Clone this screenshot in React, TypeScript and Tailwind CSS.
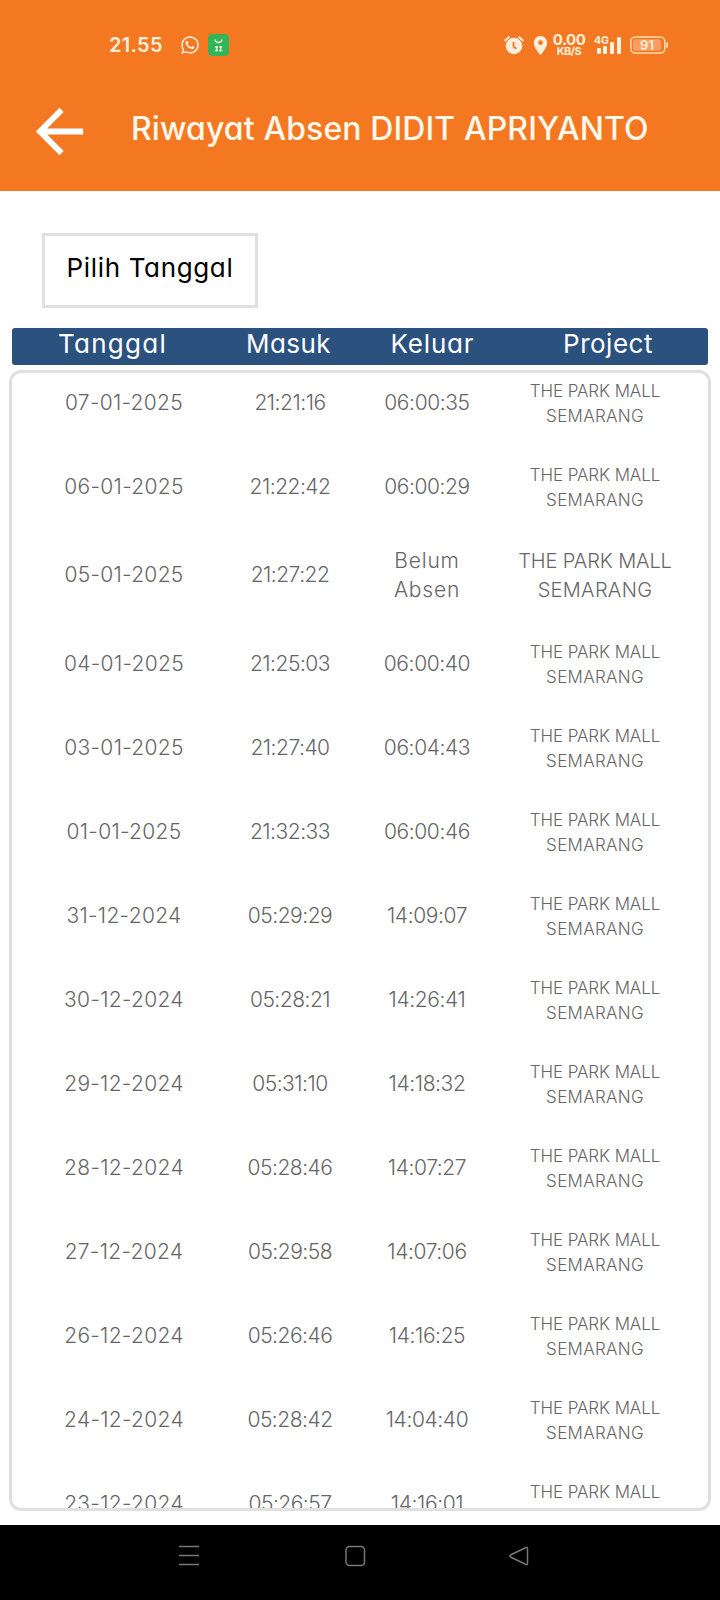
import clsx from "clsx";
import { FaWhatsapp } from "react-icons/fa";
import { MdArrowBack, MdLocationOn } from "react-icons/md";

interface Attendance {
  date: string;
  checkIn: string;
  checkOut: string | null;
}

const rows: Attendance[] = [
  { date: "07-01-2025", checkIn: "21:21:16", checkOut: "06:00:35" },
  { date: "06-01-2025", checkIn: "21:22:42", checkOut: "06:00:29" },
  { date: "05-01-2025", checkIn: "21:27:22", checkOut: null },
  { date: "04-01-2025", checkIn: "21:25:03", checkOut: "06:00:40" },
  { date: "03-01-2025", checkIn: "21:27:40", checkOut: "06:04:43" },
  { date: "01-01-2025", checkIn: "21:32:33", checkOut: "06:00:46" },
  { date: "31-12-2024", checkIn: "05:29:29", checkOut: "14:09:07" },
  { date: "30-12-2024", checkIn: "05:28:21", checkOut: "14:26:41" },
  { date: "29-12-2024", checkIn: "05:31:10", checkOut: "14:18:32" },
  { date: "28-12-2024", checkIn: "05:28:46", checkOut: "14:07:27" },
  { date: "27-12-2024", checkIn: "05:29:58", checkOut: "14:07:06" },
  { date: "26-12-2024", checkIn: "05:26:46", checkOut: "14:16:25" },
  { date: "24-12-2024", checkIn: "05:28:42", checkOut: "14:04:40" },
  { date: "23-12-2024", checkIn: "05:26:57", checkOut: "14:16:01" },
];

function StatusBar() {
  return (
    <div className="flex h-[90px] items-center pl-[109px] text-[#fff0dc]">
      <span className="w-[71px] text-[20px] font-semibold tracking-[0.3px]">21.55</span>
      <FaWhatsapp className="size-[20px]" />
      <svg className="ml-[8px] h-[22px] w-[21px]" viewBox="0 0 21 22" fill="none">
        <rect width="21" height="22" rx="4.5" fill="#32b558" />
        <path d="M7 5.5c.4 4 6.6 4 7 0" stroke="#fff0dc" strokeWidth="1.3" />
        <path d="M7 13h3M11.2 13h3M7 16.5h3M11.2 16.5h3M8.8 12v5.5M12.6 12v5.5" stroke="#e0f5d8" strokeWidth="1.3" />
      </svg>
      <svg className="ml-[275px] h-[20px] w-[20px]" viewBox="0 0 20 20" fill="none">
        <circle cx="10" cy="11" r="8.3" fill="#ffeddc" />
        <path d="M1 5.5 5 2M19 5.5 15 2" stroke="#ffeddc" strokeWidth="1.8" strokeLinecap="round" />
        <path d="M9.5 7v4.5l3 2.2" stroke="#f47822" strokeWidth="1.8" />
      </svg>
      <MdLocationOn className="ml-[5px] size-[23px]" />
      <div className="ml-[1px] flex w-[32px] flex-col items-center font-bold">
        <span className="text-[15px] leading-[12px] tracking-[-0.5px]">0.00</span>
        <span className="text-[11px] leading-[10px] tracking-[-0.5px]">KB/S</span>
      </div>
      <svg className="ml-[9px] h-[20px] w-[28px] fill-current" viewBox="0 0 28 20">
        <text x="0" y="9" className="text-[10.5px] font-bold">4G</text>
        <rect x="3" y="13" width="4" height="6" rx="1" />
        <rect x="9" y="11" width="4" height="8" rx="1" />
        <rect x="16" y="7" width="4" height="12" rx="1" />
        <rect x="23" y="2" width="4" height="17" rx="1" />
      </svg>
      <svg className="ml-[8px] h-[18px] w-[39px]" viewBox="0 0 39 18" fill="none">
        <rect x="0.8" y="1" width="34" height="16" rx="4.5" stroke="#ffd9b4" strokeWidth="1.5" />
        <rect x="3" y="3.2" width="28" height="11.6" rx="2.5" fill="#f99d60" />
        <path d="M37 6.5v5" stroke="#ffd9b4" strokeWidth="2" />
        <text x="17" y="13.8" textAnchor="middle" fill="#fff0dc" className="text-[13px] font-semibold">91</text>
      </svg>
    </div>
  );
}

function Header() {
  return (
    <header className="h-[191px] bg-[#f47822]">
      <StatusBar />
      <div className="flex h-[76px] items-center pl-[24px] text-[#fff8ea]">
        <MdArrowBack className="mt-[7px] size-[71px] text-white" />
        <h1 className="ml-[36px] mt-[2px] whitespace-nowrap text-[32px] font-medium tracking-[0.1px]">
          Riwayat Absen DIDIT APRIYANTO
        </h1>
      </div>
    </header>
  );
}

function Row({ date, checkIn, checkOut }: Attendance) {
  return (
    <div
      className={clsx(
        "grid grid-cols-[224px_108px_166px_170px] items-center text-center text-[21px] leading-[29px]",
        checkOut ? "mb-[31px] h-[53px]" : "mb-[32px] h-[61px]"
      )}
    >
      <span className="tracking-[0.3px]">{date}</span>
      <span className="tracking-[-0.5px]">{checkIn}</span>
      {checkOut ? (
        <span className="tracking-[-0.4px]">{checkOut}</span>
      ) : (
        <span className="px-[40px] tracking-[0.8px]">Belum Absen</span>
      )}
      <span className={clsx("pt-[3px]", !checkOut ? "text-[20px] tracking-[-0.1px]" : "text-[17px] leading-[25px]")}>
        <span className="tracking-[-0.1px]">THE PARK MALL</span>
        <br />
        <span className="tracking-[0.3px]">SEMARANG</span>
      </span>
    </div>
  );
}

export default function App() {
  return (
    <div className="flex h-[1600px] w-[720px] flex-col bg-white font-['Inter',sans-serif] [font-feature-settings:'cv11']">
      <Header />
      <main className="flex h-[1334px] flex-col">
        <button className="mt-[42px] ml-[42px] h-[75px] w-[216px] shrink-0 border-[3px] border-[#e0e0e0] pb-[6px] text-[26px] tracking-[0.65px] text-black">
          Pilih Tanggal
        </button>
        <div className="mx-[12px] mt-[20px] grid h-[37px] shrink-0 grid-cols-[201px_151px_137px_214px] items-center rounded-[3px] bg-[#2b517f] text-center text-[26px] leading-[30px] text-white">
          <span className="-mt-[5px] tracking-[1.3px]">Tanggal</span>
          <span className="-mt-[5px] tracking-[0.4px]">Masuk</span>
          <span className="-mt-[5px] tracking-[0.8px]">Keluar</span>
          <span className="-mt-[5px] tracking-[0.5px]">Project</span>
        </div>
        <div className="mx-[9px] mt-[5px] h-[1141px] shrink-0 overflow-hidden rounded-[12px] border-[3px] border-[#e0e0e0] pt-[3px] font-light text-[#666]">
          {rows.map((row) => (
            <Row key={row.date} {...row} />
          ))}
        </div>
      </main>
      <nav className="h-[75px] bg-black">
        <svg className="h-[75px] w-[720px]" viewBox="0 0 720 75" fill="none" stroke="#777" strokeWidth="1.5">
          <path d="M179 21.5h20M179 30.5h20M179 39.5h20" />
          <rect x="346" y="21.5" width="18.5" height="19" rx="3.5" />
          <path d="M526 22.5 510.5 30q-1.5 1 0 2L526 39.5q1.5.5 1.5-1v-15q0-1.5-1.5-1Z" />
        </svg>
      </nav>
    </div>
  );
}
